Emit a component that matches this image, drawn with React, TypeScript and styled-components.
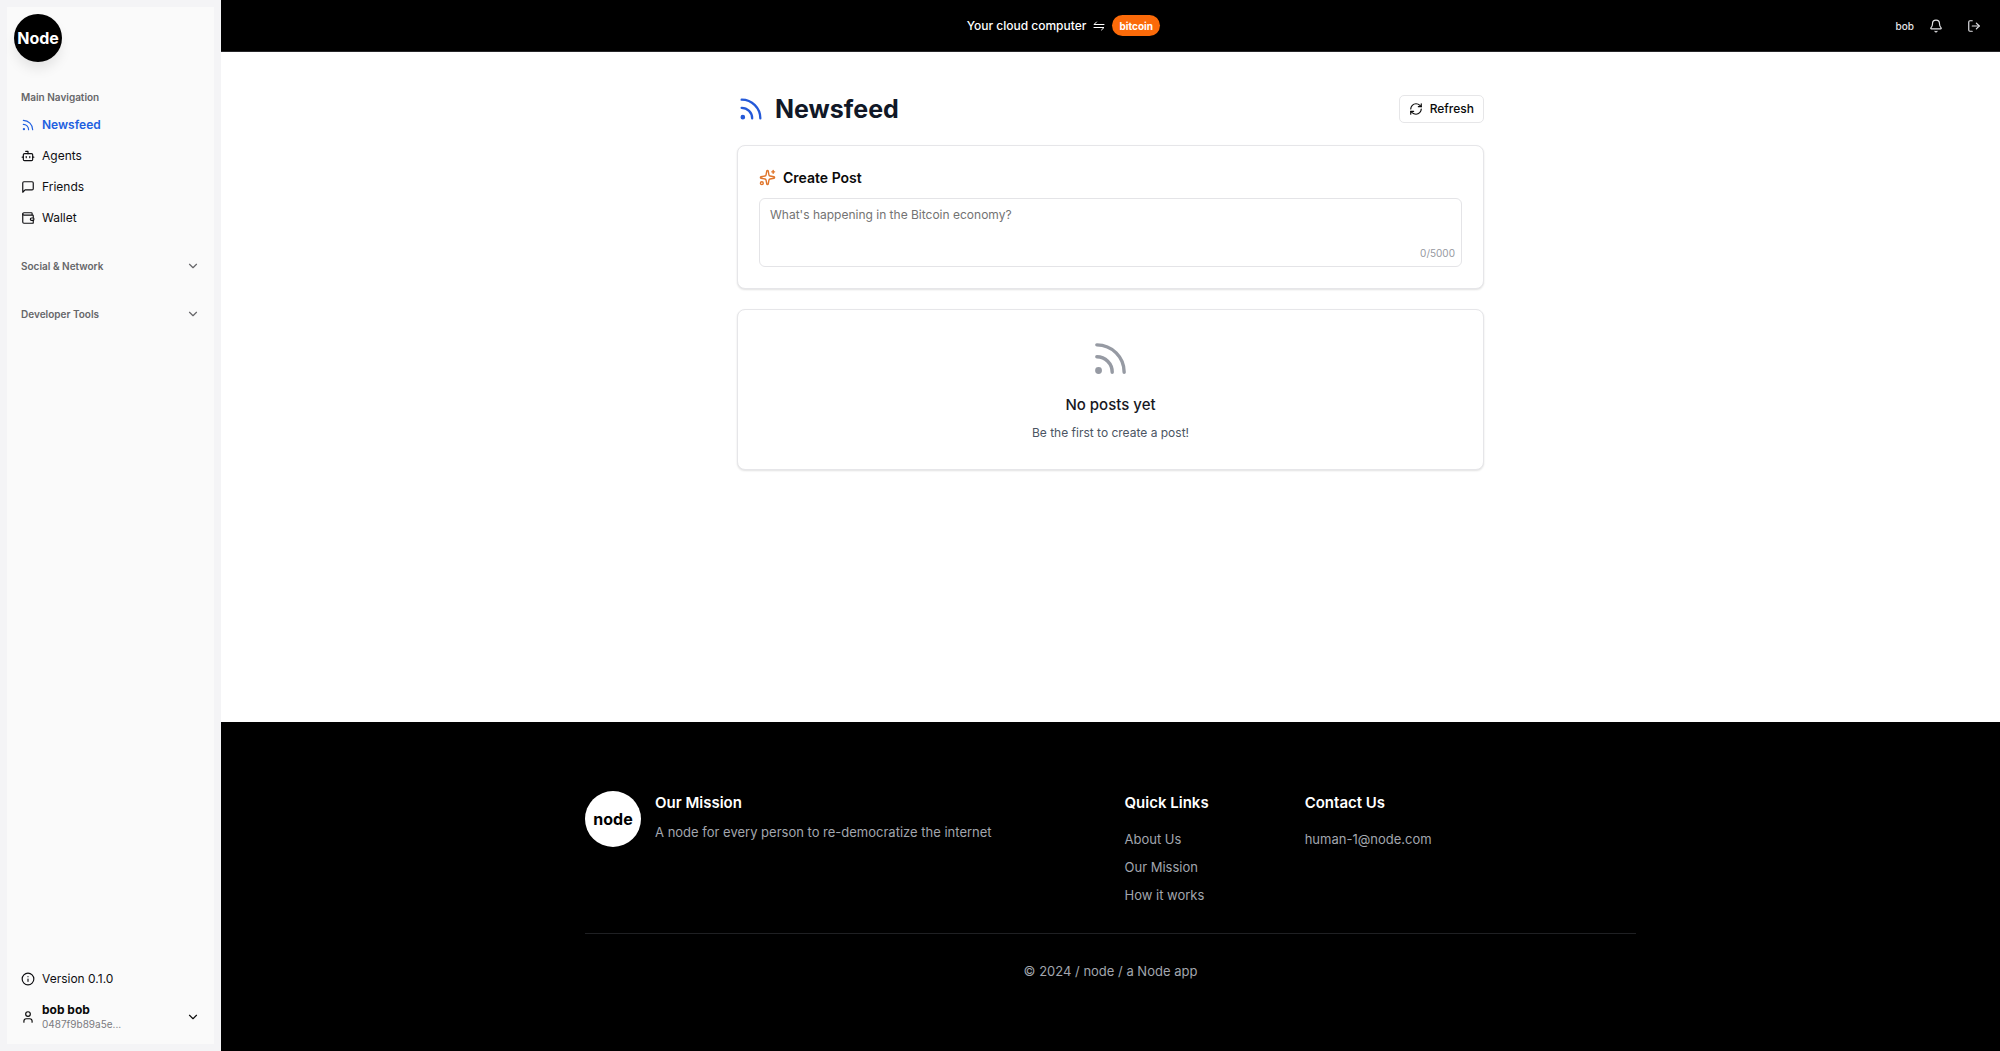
import React, { useState } from "react";
import styled, { createGlobalStyle } from "styled-components";
import {
  Rss,
  Bot,
  Wallet,
  ChevronDown,
  Info,
  User,
  Bell,
  LogOut,
  RefreshCw,
  Sparkles,
} from "lucide-react";

const GlobalStyle = createGlobalStyle`
  *, *::before, *::after { box-sizing: border-box; }
  body {
    margin: 0;
    background: #ffffff;
    color: #0a0a0a;
    font-family: Inter, "Liberation Sans", sans-serif;
    font-size: 12px;
    line-height: 16px;
  }
  h1, h2, h3, p, ul { margin: 0; padding: 0; }
  ul { list-style: none; }
  a { color: inherit; text-decoration: none; }
  button { font: inherit; color: inherit; background: none; border: 0; padding: 0; cursor: pointer; }
  svg { display: block; flex-shrink: 0; }
`;

const Shell = styled.div`
  display: flex;
  min-height: 100vh;
`;

const Sidebar = styled.aside`
  position: sticky;
  top: 0;
  display: flex;
  flex: 0 0 221px;
  height: 100vh;
  padding: 7px;
  background: #f4f4f6;
`;

const SidebarPanel = styled.div`
  display: flex;
  flex: 1;
  flex-direction: column;
  padding: 7px;
  background: #fafafa;
`;

const Logo = styled.a<{ $size: number; $inverse?: boolean }>`
  display: flex;
  flex: 0 0 auto;
  align-items: center;
  justify-content: center;
  width: ${(p) => p.$size}px;
  height: ${(p) => p.$size}px;
  border-radius: 50%;
  background: ${(p) => (p.$inverse ? "#ffffff" : "#000000")};
  color: ${(p) => (p.$inverse ? "#000000" : "#ffffff")};
  font-size: 16px;
  font-weight: 700;
  box-shadow: 0 8px 13px -2px rgba(0, 0, 0, 0.1);
`;

const Nav = styled.nav`
  display: flex;
  flex: 1;
  flex-direction: column;
  gap: 20px;
  padding-top: 21px;
`;

const GroupLabel = styled.h2`
  display: flex;
  align-items: center;
  height: 28px;
  padding: 0 7px;
  color: #666669;
  font-size: 10px;
  font-weight: 600;
`;

const GroupToggle = styled.button`
  display: flex;
  align-items: center;
  justify-content: space-between;
  width: 100%;
  height: 28px;
  padding: 0 7px;
  color: #666669;
  font-size: 10px;
  font-weight: 600;
`;

const NavList = styled.ul`
  display: flex;
  flex-direction: column;
  gap: 3px;
`;

const NavLink = styled.a<{ $active?: boolean }>`
  display: flex;
  align-items: center;
  gap: 7px;
  height: 28px;
  padding: 0 7px;
  color: ${(p) => (p.$active ? "#2160e0" : "#0f0f12")};
  font-weight: ${(p) => (p.$active ? 600 : 400)};
`;

const SidebarFooter = styled.div`
  display: flex;
  flex-direction: column;
  gap: 3px;
`;

const AccountButton = styled.button`
  display: flex;
  align-items: center;
  gap: 7px;
  height: 41px;
  padding: 0 7px;
  text-align: left;
`;

const AccountText = styled.span`
  display: flex;
  flex: 1;
  flex-direction: column;
`;

const AccountName = styled.span`
  font-weight: 700;
  line-height: 15px;
`;

const AccountKey = styled.span`
  color: #7b7b80;
  font-size: 10px;
  line-height: 14px;
`;

const Column = styled.div`
  display: flex;
  flex: 1;
  flex-direction: column;
  min-width: 0;
`;

const TopBar = styled.header`
  display: flex;
  align-items: center;
  height: 52px;
  padding: 0 7px 0 10px;
  border-bottom: 1px solid #27272a;
  background: #000000;
  color: #ffffff;
`;

const Tagline = styled.div`
  display: flex;
  align-items: center;
  gap: 7px;
  margin: 0 auto;
  font-weight: 500;
`;

const Badge = styled.span`
  display: flex;
  align-items: center;
  height: 21px;
  padding: 0 7px;
  border-radius: 11px;
  background: #fb6a09;
  font-size: 10px;
  font-weight: 700;
`;

const TopActions = styled.div`
  display: flex;
  align-items: center;
  font-size: 10px;
  font-weight: 500;
  color: #e4e4e7;
`;

const UserName = styled.span`
  padding-right: 3px;
`;

const IconButton = styled.button`
  display: flex;
  align-items: center;
  justify-content: center;
  width: 38px;
  height: 34px;
`;

const Main = styled.main`
  display: flex;
  flex: 1;
  flex-direction: column;
  gap: 20px;
  width: 100%;
  max-width: 747px;
  margin: 0 auto;
  padding: 41px 0;
`;

const PageHead = styled.div`
  display: flex;
  align-items: center;
  justify-content: space-between;
  height: 32px;
`;

const Title = styled.h1`
  display: flex;
  align-items: center;
  gap: 10px;
  color: #111827;
  font-size: 25px;
  font-weight: 700;
  line-height: 32px;
  svg { color: #2459d8; }
`;

const RefreshButton = styled.button`
  display: flex;
  align-items: center;
  gap: 7px;
  height: 28px;
  padding: 0 9px;
  border: 1px solid #e6e6e8;
  border-radius: 5px;
  background: #ffffff;
  font-weight: 500;
`;

const Card = styled.section`
  padding: 21px;
  border: 1px solid #e6e6e9;
  border-radius: 8px;
  background: #ffffff;
  box-shadow: 0 1px 2px rgba(0, 0, 0, 0.12);
`;

const CardTitle = styled.h2`
  display: flex;
  align-items: center;
  gap: 7px;
  margin-bottom: 10px;
  font-size: 14px;
  font-weight: 600;
  line-height: 21px;
  svg { color: #e0752b; }
`;

const Field = styled.div`
  position: relative;
`;

const PostInput = styled.textarea`
  display: block;
  width: 100%;
  height: 69px;
  padding: 8px 10px;
  border: 1px solid #e4e4e7;
  border-radius: 6px;
  outline: 0;
  background: #ffffff;
  color: inherit;
  font: inherit;
  resize: none;
  &::placeholder { color: #737373; opacity: 1; }
`;

const Counter = styled.span`
  position: absolute;
  right: 7px;
  bottom: 6px;
  color: #96999f;
  font-size: 10px;
`;

const EmptyCard = styled(Card)`
  display: flex;
  flex-direction: column;
  align-items: center;
  padding: 28px 21px;
  svg { color: #969aa3; }
`;

const EmptyTitle = styled.h3`
  margin: 14px 0 7px;
  color: #18181f;
  font-size: 15px;
  font-weight: 500;
  line-height: 24px;
`;

const EmptyText = styled.p`
  color: #4b5563;
  line-height: 17px;
`;

const Footer = styled.footer`
  padding: 69px 20px;
  background: #000000;
  color: #a2a6ae;
  font-size: 13px;
  line-height: 21px;
`;

const FooterInner = styled.div`
  max-width: 1051px;
  margin: 0 auto;
`;

const FooterGrid = styled.div`
  display: grid;
  grid-template-columns: 539fr 180fr 331fr;
  padding-bottom: 27px;
  border-bottom: 1px solid #1f2023;
`;

const Mission = styled.div`
  display: flex;
  gap: 14px;
`;

const FooterTitle = styled.h3`
  color: #ffffff;
  font-size: 15px;
  font-weight: 600;
  line-height: 24px;
`;

const MissionText = styled.p`
  margin-top: 7px;
`;

const LinkList = styled.ul`
  display: flex;
  flex-direction: column;
  gap: 7px;
  margin-top: 14px;
`;

const Copyright = styled.p`
  padding-top: 27px;
  text-align: center;
`;

function SwapArrows() {
  return (
    <svg width="12" height="10" viewBox="0 0 12 10" fill="none" stroke="currentColor" strokeWidth="1" strokeLinecap="round" strokeLinejoin="round" aria-hidden="true">
      <path d="M3.5 1 1 3.5h10M1 6.500h10L8.500 9" />
    </svg>
  );
}

function SpeechBubble({ size }: { size: number }) {
  return (
    <svg width={size} height={size} viewBox="0 0 24 24" fill="none" stroke="currentColor" strokeWidth="2" strokeLinecap="round" strokeLinejoin="round" aria-hidden="true">
      <path d="M21 15a2 2 0 0 1-2 2H7l-4 4V5a2 2 0 0 1 2-2h14a2 2 0 0 1 2 2z" />
    </svg>
  );
}

const links = [
  { label: "Newsfeed", Icon: Rss, active: true },
  { label: "Agents", Icon: Bot },
  { label: "Friends", Icon: SpeechBubble },
  { label: "Wallet", Icon: Wallet },
];

const limit = 5000;

export default function App() {
  const [post, setPost] = useState("");
  return (
    <>
      <GlobalStyle />
      <Shell>
        <Sidebar>
          <SidebarPanel>
            <Logo href="#home" $size={48}>Node</Logo>
            <Nav aria-label="Main">
              <div>
                <GroupLabel>Main Navigation</GroupLabel>
                <NavList>
                  {links.map(({ label, Icon, active }) => (
                    <li key={label}>
                      <NavLink href={"#" + label.toLowerCase()} $active={active}>
                        <Icon size={14} />
                        {label}
                      </NavLink>
                    </li>
                  ))}
                </NavList>
              </div>
              <GroupToggle type="button">
                Social &amp; Network
                <ChevronDown size={14} />
              </GroupToggle>
              <GroupToggle type="button">
                Developer Tools
                <ChevronDown size={14} />
              </GroupToggle>
            </Nav>
            <SidebarFooter>
              <NavLink href="#version">
                <Info size={14} />
                Version 0.1.0
              </NavLink>
              <AccountButton type="button">
                <User size={14} />
                <AccountText>
                  <AccountName>bob bob</AccountName>
                  <AccountKey>0487f9b89a5e...</AccountKey>
                </AccountText>
                <ChevronDown size={14} />
              </AccountButton>
            </SidebarFooter>
          </SidebarPanel>
        </Sidebar>
        <Column>
          <TopBar>
            <Tagline>
              Your cloud computer
              <SwapArrows />
              <Badge>bitcoin</Badge>
            </Tagline>
            <TopActions>
              <UserName>bob</UserName>
              <IconButton type="button" aria-label="Notifications">
                <Bell size={14} />
              </IconButton>
              <IconButton type="button" aria-label="Log out">
                <LogOut size={14} />
              </IconButton>
            </TopActions>
          </TopBar>
          <Main>
            <PageHead>
              <Title>
                <Rss size={28} />
                Newsfeed
              </Title>
              <RefreshButton type="button">
                <RefreshCw size={14} />
                Refresh
              </RefreshButton>
            </PageHead>
            <Card>
              <CardTitle>
                <Sparkles size={17} />
                <label htmlFor="post">Create Post</label>
              </CardTitle>
              <Field>
                <PostInput
                  id="post"
                  maxLength={limit}
                  placeholder="What's happening in the Bitcoin economy?"
                  value={post}
                  onChange={(e) => setPost(e.target.value)}
                />
                <Counter>{post.length}/{limit}</Counter>
              </Field>
            </Card>
            <EmptyCard>
              <Rss size={41} />
              <EmptyTitle>No posts yet</EmptyTitle>
              <EmptyText>Be the first to create a post!</EmptyText>
            </EmptyCard>
          </Main>
          <Footer>
            <FooterInner>
              <FooterGrid>
                <Mission>
                  <Logo href="#home" $size={56} $inverse>node</Logo>
                  <div>
                    <FooterTitle>Our Mission</FooterTitle>
                    <MissionText>A node for every person to re-democratize the internet</MissionText>
                  </div>
                </Mission>
                <div>
                  <FooterTitle>Quick Links</FooterTitle>
                  <LinkList>
                    <li><a href="#about">About Us</a></li>
                    <li><a href="#mission">Our Mission</a></li>
                    <li><a href="#how">How it works</a></li>
                  </LinkList>
                </div>
                <div>
                  <FooterTitle>Contact Us</FooterTitle>
                  <LinkList>
                    <li><a href="mailto:human-1@node.com">human-1@node.com</a></li>
                  </LinkList>
                </div>
              </FooterGrid>
              <Copyright>© 2024 / node / a Node app</Copyright>
            </FooterInner>
          </Footer>
        </Column>
      </Shell>
    </>
  );
}
